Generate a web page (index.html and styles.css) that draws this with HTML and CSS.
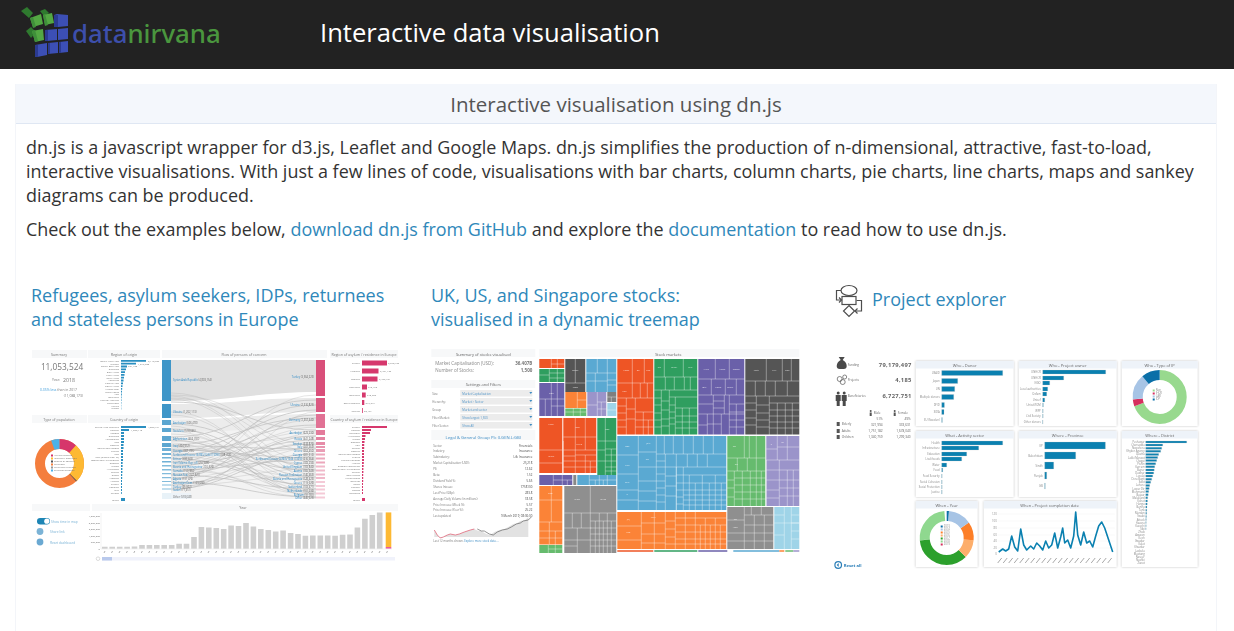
FILE: index.html
```html
<!DOCTYPE html>
<html lang="en">
<head>
<meta charset="utf-8">
<title>Interactive data visualisation</title>
<link rel="stylesheet" href="styles.css">
</head>
<body>
<header class="topbar">
  <a class="logo" href="#">
    <svg class="logo-mark" viewBox="15 7 55 55" width="55" height="55">
      <g fill="#2f7a2f"><path d="M21 11l6-4 6 6-4 5zM40 11l5-2 4 4-5 3zM26 31l5-4 5 5-5 6z"/></g>
      <g fill="#3c4fb5"><path d="M54 15l3-1 11 1v11l-10 1-4-1z"/><path d="M45 30l12-1v11l-10 1-2-1zM58 29l10-1v11l-10 1z"/><path d="M35 45l12-2v12l-10 2-2-1zM48 43l10-1v11l-10 1zM59 42l9-1v11l-9 1z"/></g>
      <g fill="#2b3a90"><path d="M54 15h4v12h-4zM45 30h3v11h-3zM35 45h3v12h-3zM48 43h2v11h-2zM59 42h2v11h-2z"/></g>
      <g fill="#53a843"><path d="M30 18l11-4 2 10-10 3zM43 15l9-2 2 10-9 2zM32 31l11-2 1 11-9 2z"/></g>
      <g fill="#3f8f3a"><path d="M30 18l3-1 3 10-3 1zM43 15l2-1 3 11-3 1zM32 31l3-1 3 11-3 1z"/></g>
    </svg>
    <span class="logo-text"><span class="logo-data">data</span><span class="logo-nirvana">nirvana</span></span>
  </a>
  <h1 class="site-title">Interactive data visualisation</h1>
</header>

<main class="panel">
  <h2 class="panel-title">Interactive visualisation using dn.js</h2>
  <div class="panel-body">
    <p>dn.js is a javascript wrapper for d3.js, Leaflet and Google Maps. dn.js simplifies the production of n-dimensional, attractive, fast-to-load, interactive visualisations. With just a few lines of code, visualisations with bar charts, column charts, pie charts, line charts, maps and sankey diagrams can be produced.</p>
    <p>Check out the examples below, <a href="#">download dn.js from GitHub</a> and explore the <a href="#">documentation</a> to read how to use dn.js.</p>
  </div>

  <section class="gallery">
    <article class="item">
      <h3 class="item-title"><a href="#">Refugees, asylum seekers, IDPs, returnees and stateless persons in Europe</a></h3>
      <svg class="thumb" viewBox="31 349 370 222" width="370" height="222">
        <g fill="#f7f8f9"><path d="M32 350h55v8H32zM88 350h72v8H88zM162 350h165v8H162zM330 350h68v8h-68zM32 415h55v8H32zM88 415h72v8H88zM330 415h68v8h-68zM32 504h58v7H32zM92 504h306v7H92z"/></g>
        <g class="cap" text-anchor="middle"><text x="59" y="356">Summary</text><text x="124" y="356">Region of origin</text><text x="244" y="356">Flow of persons of concern</text><text x="364" y="356">Region of asylum / residence in Europe</text><text x="59" y="421">Type of population</text><text x="124" y="421">Country of origin</text><text x="364" y="421">Country of asylum / residence in Europe</text><text x="243" y="509">Year</text></g>
        <text class="big" x="62" y="370" text-anchor="middle">11,053,524</text>
        <text class="sm" x="60" y="381" text-anchor="end">Year:</text><text class="mid" x="69" y="381.5" text-anchor="middle">2018</text>
        <text class="sm" x="40" y="391"><tspan fill="#3a9ad9">0.35% less</tspan> than in 2017</text>
        <text class="sm" x="83" y="396.5" text-anchor="end">(11,088,173)</text>

        <g fill="#2a8fc1"><path d="M121 360h25v1.8h-25zM121 362.8h15v1.8h-15zM121 365.6h6v1.8h-6zM121 368.4h5v1.8h-5zM121 371.2h4v1.8h-4zM121 374h3.5v1.8h-3.5zM121 376.8h3v1.8h-3zM121 379.6h2.5v1.8h-2.5zM121 382.4h2v1.8h-2zM121 385.2h1.5v1.8h-1.5zM121 388h1.2v1.8h-1.2zM121 390.8h1v1.8h-1zM121 393.6h.8v1.8h-.8zM121 396.4h.6v1.8h-.6zM121 399.2h.5v1.8h-.5zM121 402h.4v1.8h-.4zM121 404.8h.3v1.8h-.3zM121 407.6h.3v1.8h-.3z"/>
        <path d="M121 426h25v2h-25zM121 429h8v2h-8zM121 432h3v2h-3zM121 435h3v2h-3zM121 438h3v2h-3zM121 441h3v2h-3zM121 444h2.5v2h-2.5zM121 447h2.5v2h-2.5zM121 450h2v2h-2zM121 453h2v2h-2zM121 456h2v2h-2zM121 459h2v2h-2zM121 462h1.6v2h-1.6zM121 465h1.6v2h-1.6zM121 468h1.4v2h-1.4zM121 471h1.4v2h-1.4zM121 474h1.2v2h-1.2zM121 477h1.2v2h-1.2zM121 480h1v2h-1zM121 483h1v2h-1zM121 486h1v2h-1zM121 489h1v2h-1zM121 492h.8v2h-.8zM121 498h4v3h-4z"/></g>
        <g class="lb" text-anchor="end"><text x="119" y="361.8">South-West Asia</text><text x="119" y="364.6">Europe</text><text x="119" y="367.4">South-East Asia</text><text x="119" y="370.2">Stateless</text><text x="119" y="373">East Africa</text><text x="119" y="375.8">West Africa</text><text x="119" y="378.6">Horn Africa</text><text x="119" y="381.4">Americas</text><text x="119" y="384.2">Central Asia</text><text x="119" y="387">North Africa</text><text x="119" y="389.8">Middle East</text><text x="119" y="392.6">Great Lakes</text><text x="119" y="395.4">Asia</text><text x="119" y="398.2">Southern</text><text x="119" y="401">Central America</text><text x="119" y="403.8">Caribbean</text><text x="119" y="406.6">Pacific</text><text x="119" y="409.4">Russia</text>
        <text x="119" y="428">Syrian Arab Republic</text><text x="119" y="431">Ukraine</text><text x="119" y="434">Kosovo</text><text x="119" y="437">Stateless</text><text x="119" y="440">Afghanistan</text><text x="119" y="443">Iraq</text><text x="119" y="446">Georgia</text><text x="119" y="449">Serbia and Kosovo</text><text x="119" y="452">Eritrea</text><text x="119" y="455">Iran</text><text x="119" y="458">Iran (Islamic Rep. of)</text><text x="119" y="461">Bosnia and Herzegovina</text><text x="119" y="464">Somalia</text><text x="119" y="467">Russia</text><text x="119" y="470">Azerbaijan</text><text x="119" y="473">Nigeria</text><text x="119" y="476">Sudan</text><text x="119" y="479">Armenia</text><text x="119" y="482">Albania</text><text x="119" y="485">Turkey</text><text x="119" y="488">Pakistan</text><text x="119" y="491">Mali</text><text x="119" y="494">Guinea</text><text x="119" y="501">Other</text></g>

        <g fill="none" stroke-width="10">
          <circle cx="59.5" cy="463.5" r="19.5" pathLength="360" stroke="#f47e3d"/>
          <circle cx="59.5" cy="463.5" r="19.5" pathLength="360" stroke="#fdb933" stroke-dasharray="93 267" transform="rotate(-48 59.5 463.5)"/>
          <circle cx="59.5" cy="463.5" r="19.5" pathLength="360" stroke="#d6366b" stroke-dasharray="42 318" transform="rotate(-90 59.5 463.5)"/>
          <circle cx="59.5" cy="463.5" r="19.5" pathLength="360" stroke="#4db2e8" stroke-dasharray="20 340" transform="rotate(-110 59.5 463.5)"/>
          <circle cx="59.5" cy="463.5" r="19.5" pathLength="360" stroke="#555" stroke-dasharray="2 358" transform="rotate(45 59.5 463.5)"/>
        </g>
        <g><rect x="51" y="454.5" width="2" height="2" fill="#d6366b"/><rect x="51" y="457.5" width="2" height="2" fill="#fdb933"/><rect x="51" y="460.5" width="2" height="2" fill="#555"/><rect x="51" y="463.5" width="2" height="2" fill="#f47e3d"/><rect x="51" y="466.5" width="2" height="2" fill="#999"/><rect x="51" y="469.5" width="2" height="2" fill="#4db2e8"/></g>
        <g class="lb"><text x="54" y="456.2">Asylum-seekers</text><text x="54" y="459.2">Internally displaced</text><text x="54" y="462.2">Others of concern</text><text x="54" y="465.2">Refugees</text><text x="54" y="468.2">Returned refugees</text><text x="54" y="471.2">Stateless persons</text></g>

        <!-- sankey -->
        <path d="M171 418C240 418 250 428 316 428V499H171Z" fill="#f3f3f3"/>
        <path d="M171 360H316V392C260 392 230 401 171 401Z" fill="#e0e0e0"/>
        <path d="M171 404C240 404 250 398 316 398V412C250 412 240 418 171 418Z" fill="#e9e9e9"/>
        <path d="M171 420C230 420 250 414 316 414V428C250 428 230 432 171 432Z" fill="#ececec"/>
        <rect x="171" y="493" width="20" height="6" fill="#edf3f8"/>
        <g fill="none" stroke="#c4c4c4" stroke-width=".8">
          <path d="M171 402C240 402 250 430 316 430M171 437C240 437 250 400 316 400M171 445C230 445 250 418 316 418M171 449C240 449 250 470 316 470M171 452C230 452 260 410 316 410M171 455C240 455 250 425 316 425M171 458C230 458 250 485 316 485M171 462C240 462 240 405 316 405M171 466C230 466 260 440 316 440M171 470C230 470 250 460 316 460M171 474C240 474 250 444 316 444M171 478C240 478 250 415 316 415M171 482C240 482 250 497 316 497M171 485C240 485 250 436 316 436M171 489C230 489 250 454 316 454M171 429C240 429 250 477 316 477M171 424C240 424 250 466 316 466M171 440C240 440 250 493 316 493M171 446C240 446 250 449 316 449M171 450C240 450 250 458 316 458M171 475C240 475 250 489 316 489"/>
        </g>
        <g fill="none" stroke="#b5b5b5" stroke-width=".35">
          <path d="M171 399C230 399 260 470 316 470M171 398C240 398 260 452 316 452M171 396C230 396 280 482 316 482M171 395C250 395 250 445 316 445M171 393C240 393 250 462 316 462M171 412C240 412 250 489 316 489M171 415C230 415 250 474 316 474M171 465C230 465 250 420 316 420M171 480C230 480 250 395 316 395M171 490C240 490 270 412 316 412M171 470C250 470 250 494 316 494M171 456C230 456 260 478 316 478M171 426C220 426 270 498 316 498M171 431C220 431 270 483 316 483M171 438C220 438 270 472 316 472M171 443C220 443 270 492 316 492M171 447C220 447 270 464 316 464M171 451C220 451 270 436 316 436M171 459C220 459 270 431 316 431M171 463C220 463 270 448 316 448M171 467C220 467 270 427 316 427M171 472C220 472 270 442 316 442M171 476C220 476 270 433 316 433M171 479C220 479 270 456 316 456M171 483C220 483 270 468 316 468M171 486C220 486 270 475 316 475M171 488C220 488 270 447 316 447M171 434C250 434 240 495 316 495M171 441C250 441 240 486 316 486M171 453C250 453 240 491 316 491M171 460C250 460 240 480 316 480M171 468C250 468 240 497 316 497"/>
        </g>
        <g fill="#3f96c8"><path d="M162 360h9v41h-9zM162 404h9v14h-9z"/><path d="M162 420h9v5h-9zM162 428h9v4h-9zM162 436h9v5h-9zM162 443h9v4h-9z" opacity=".85"/><path d="M162 448h9v3h-9zM162 453h9v2h-9zM162 457h9v1.6h-9zM162 461h9v1.6h-9z" opacity=".75"/><path d="M162 465h9v1.4h-9zM162 469h9v1.4h-9zM162 473h9v1.2h-9zM162 477h9v1.2h-9zM162 481h9v1h-9zM162 484.6h9v1h-9zM162 488.4h9v1h-9z" opacity=".65"/><path d="M162 493h9v6h-9z" opacity=".12"/></g>
        <g fill="#d94f7a"><path d="M316 360h9v36h-9z"/><path d="M316 398h9v14h-9z" opacity=".95"/><path d="M316 414h9v14h-9z" opacity=".8"/><path d="M316 430h9v5h-9z" opacity=".75"/><path d="M316 437h9v3h-9z" opacity=".7"/><path d="M316 442h9v3h-9z" opacity=".65"/><path d="M316 446h9v2h-9z" opacity=".6"/><path d="M316 449h9v3h-9z" opacity=".55"/><path d="M316 453.5h9v2h-9zM316 457.5h9v2h-9zM316 461.5h9v2h-9z" opacity=".5"/><path d="M316 465.5h9v2h-9zM316 469.5h9v2h-9zM316 473.5h9v2h-9zM316 477h9v2h-9z" opacity=".4"/><path d="M316 481h9v2h-9zM316 485h9v2h-9zM316 488.5h9v2h-9zM316 492.5h9v2h-9zM316 496.5h9v2h-9z" opacity=".3"/></g>
        <g class="sk"><text x="173" y="381"><tspan class="bl">Syrian Arab Republic</tspan> (4,803,154)</text><text x="173" y="412.5"><tspan class="bl">Ukraine</tspan> (1,202,113)</text><text x="173" y="424"><tspan class="bl">Azerbaijan</tspan> (606,478)</text><text x="173" y="431.5"><tspan class="bl">Stateless</tspan> (518,046)</text><text x="173" y="440"><tspan class="bl">Afghanistan</tspan> (466,393)</text><text x="173" y="446.5"><tspan class="bl">Iraq</tspan> (404,912)</text><text x="173" y="451.5"><tspan class="bl">Georgia</tspan> (367,785)</text><text x="173" y="456"><tspan class="bl">Serbia and Kosovo (S/RES/1244 (1999))</tspan> (338,768)</text><text x="173" y="460"><tspan class="bl">Eritrea</tspan> (308,343)</text><text x="173" y="464"><tspan class="bl">Iran (Islamic Rep. of)</tspan> (257,688)</text><text x="173" y="468"><tspan class="bl">Bosnia and Herzegovina</tspan> (191,326)</text><text x="173" y="472"><tspan class="bl">Somalia</tspan> (150,984)</text><text x="173" y="476"><tspan class="bl">Russian Fed.</tspan> (147,921)</text><text x="173" y="480"><tspan class="bl">Algeria</tspan> (131,476)</text><text x="173" y="484"><tspan class="bl">Azerbaijan Dem.</tspan> (129,058)</text><text x="173" y="487.5"><tspan class="bl">Turkey</tspan> (95,002)</text><text x="173" y="491"><tspan class="bl">Sudan</tspan> (77,451)</text><text x="173" y="497.5">Other (559,648)</text></g>
        <g class="sk" text-anchor="end"><text x="314" y="378"><tspan class="bl">Turkey</tspan> (3,564,223)</text><text x="314" y="406"><tspan class="bl">Ukraine</tspan> (2,316,825)</text><text x="314" y="421"><tspan class="bl">Germany</tspan> (1,357,440)</text><text x="314" y="433.5"><tspan class="bl">Azerbaijan</tspan> (623,230)</text><text x="314" y="439.5"><tspan class="bl">Russia</tspan> (441,248)</text><text x="314" y="444.5"><tspan class="bl">Sweden</tspan> (318,876)</text><text x="314" y="448"><tspan class="bl">Italy</tspan> (287,369)</text><text x="314" y="452"><tspan class="bl">Greece</tspan> (263,450)</text><text x="314" y="456"><tspan class="bl">Georgia</tspan> (281,312)</text><text x="314" y="460"><tspan class="bl">Serbia and Kosovo (S/RES/1244 (1999))</tspan> (216,364)</text><text x="314" y="464"><tspan class="bl">Cyprus</tspan> (183,293)</text><text x="314" y="468"><tspan class="bl">United Kingdom</tspan> (169,840)</text><text x="314" y="472"><tspan class="bl">Austria</tspan> (165,345)</text><text x="314" y="476"><tspan class="bl">Russian Federation</tspan> (146,463)</text><text x="314" y="480"><tspan class="bl">Bosnia and Herzegovina</tspan> (128,423)</text><text x="314" y="484"><tspan class="bl">Greece</tspan> (113,226)</text><text x="314" y="488"><tspan class="bl">Switzerland</tspan> (103,471)</text><text x="314" y="492"><tspan class="bl">Netherlands</tspan> (101,236)</text><text x="314" y="495.5"><tspan class="bl">Belgium</tspan> (91,781)</text><text x="314" y="499"><tspan class="bl">Other</tspan> (446,225)</text></g>

        <g fill="#d6386d"><path d="M362 360.5h25v5h-25zM362 368.5h16.5v5h-16.5zM362 376.5h15.5v5h-15.5zM362 384.5h5v5h-5zM362 392.5h3.7v5h-3.7zM362 400h2.3v5h-2.3zM362 408h.8v5h-.8z"/>
        <path d="M362 426h25v2h-25zM362 429h9v2h-9zM362 432h8v2h-8zM362 435h3.5v2h-3.5zM362 438h3v2h-3zM362 441h2.5v2h-2.5zM362 444h2.2v2h-2.2zM362 447h2.2v2h-2.2zM362 450h2v2h-2zM362 453h2v2h-2zM362 456h2v2h-2zM362 459h2v2h-2zM362 462h1.8v2h-1.8zM362 465h1.6v2h-1.6zM362 468h1.4v2h-1.4zM362 471h1.4v2h-1.4zM362 474h1.2v2h-1.2zM362 477h1.2v2h-1.2zM362 480h1.2v2h-1.2zM362 483h1v2h-1zM362 486h1v2h-1zM362 489h1v2h-1zM362 492h1v2h-1zM362 498h3v3h-3z"/></g>
        <g class="lb" text-anchor="end"><text x="360" y="364">Turkey</text><text x="360" y="372">Western</text><text x="360" y="380">Eastern</text><text x="360" y="388">Northern</text><text x="360" y="396">Southern</text><text x="360" y="403.5">South Eastern</text><text x="360" y="411.5">Central</text>
        <text x="360" y="428">Turkey</text><text x="360" y="431">Ukraine</text><text x="360" y="434">Germany</text><text x="360" y="437">Azerbaijan</text><text x="360" y="440">Russia</text><text x="360" y="443">Sweden</text><text x="360" y="446">Italy</text><text x="360" y="449">Greece</text><text x="360" y="452">Georgia</text><text x="360" y="455">Serbia and Kosovo</text><text x="360" y="458">Cyprus</text><text x="360" y="461">United Kingdom</text><text x="360" y="464">Austria</text><text x="360" y="467">Russian Federation</text><text x="360" y="470">Bosnia and Herzegovina</text><text x="360" y="473">Greece</text><text x="360" y="476">Switzerland</text><text x="360" y="479">Netherlands</text><text x="360" y="482">Belgium</text><text x="360" y="485">Spain</text><text x="360" y="488">Norway</text><text x="360" y="491">Poland</text><text x="360" y="494">Denmark</text><text x="360" y="501">Other</text></g>
        <g class="lb" text-anchor="start"><text x="388" y="364">3,758,106</text><text x="380" y="372">2,481,126</text><text x="379" y="380">2,405,104</text><text x="368" y="388">742,162</text><text x="367" y="396">540,226</text><text x="365.5" y="403.5">319,217</text><text x="364" y="411.5">82,131</text><text x="148" y="361.8">3,110,937</text><text x="138" y="364.6">1,845,330</text><text x="128" y="367.4">621,130</text><text x="148" y="428">4,803,154</text><text x="131" y="431">1,202,113</text></g>

        <!-- controls and year -->
        <rect x="37" y="518" width="13" height="6.5" rx="3.2" fill="#1d85b5"/><circle cx="46.8" cy="521.2" r="2.6" fill="#fff"/>
        <text class="lk" x="51" y="522.5">Show time in map</text>
        <circle cx="40" cy="531.5" r="3.4" fill="#7bb3d6"/><text class="lk" x="50" y="533">Share link</text>
        <circle cx="40" cy="542" r="3.4" fill="#6aa9d2"/><text class="lk" x="50" y="543.5">Reset dashboard</text>
        <path fill="#cfcfcf" d="M102 548.7v-2h5.6v2zM109.4 548.7v-2h5.6v2zM116.9 548.7v-2h5.6v2zM124.3 548.7v-2h5.6v2zM131.7 548.7v-2.3h5.6v2.3zM139.2 548.7v-3.7h5.6v3.7zM146.6 548.7v-3.7h5.6v3.7zM154 548.7v-3.7h5.6v3.7zM161.4 548.7v-3.7h5.6v3.7zM168.9 548.7v-3.7h5.6v3.7zM176.3 548.7v-5h5.6v5zM183.7 548.7v-5h5.6v5zM191.2 548.7v-11.7h5.6v11.7zM198.6 548.7v-21.7h5.6v21.7zM206 548.7v-21.3h5.6v21.3zM213.5 548.7v-20.7h5.6v20.7zM220.9 548.7v-19.7h5.6v19.7zM228.3 548.7v-23.3h5.6v23.3zM235.7 548.7v-22.7h5.6v22.7zM243.2 548.7v-25.7h5.6v25.7zM250.6 548.7v-22.3h5.6v22.3zM258 548.7v-19.7h5.6v19.7zM265.5 548.7v-18.7h5.6v18.7zM272.9 548.7v-17.3h5.6v17.3zM280.3 548.7v-18.3h5.6v18.3zM287.8 548.7v-15.7h5.6v15.7zM295.2 548.7v-14.7h5.6v14.7zM302.6 548.7v-13h5.6v13zM310 548.7v-13.3h5.6v13.3zM317.5 548.7v-13.3h5.6v13.3zM324.9 548.7v-13.3h5.6v13.3zM332.3 548.7v-13h5.6v13zM339.8 548.7v-14h5.6v14zM347.2 548.7v-14.3h5.6v14.3zM354.6 548.7v-21.3h5.6v21.3zM362.1 548.7v-30h5.6v30zM369.5 548.7v-33.7h5.6v33.7zM376.9 548.7v-36.3h5.6v36.3z"/>
        <path d="M385.7 512.4h5.6v34.6h-5.6z" fill="#fdb933"/><path d="M385.7 547h5.6v1.7h-5.6z" fill="#e85c9c"/>
        <path d="M101 513V549H392" fill="none" stroke="#ddd" stroke-width=".4"/>
        <g class="lb" text-anchor="end"><text x="100" y="517">4,000,000</text><text x="100" y="523.5">3,000,000</text><text x="100" y="530">2,000,000</text><text x="100" y="536.5">1,000,000</text><text x="100" y="543">500,000</text><text x="100" y="550">0</text></g>
        <path d="M104 553l1-2M111.5 553l1-2M119 553l1-2M126.4 553l1-2M133.8 553l1-2M141.3 553l1-2M148.7 553l1-2M156 553l1-2M163.5 553l1-2M171 553l1-2M178.4 553l1-2M185.8 553l1-2M193.3 553l1-2M200.7 553l1-2M208 553l1-2M215.6 553l1-2M223 553l1-2M230.4 553l1-2M237.8 553l1-2M245.3 553l1-2M252.7 553l1-2M260 553l1-2M267.6 553l1-2M275 553l1-2M282.4 553l1-2M289.9 553l1-2M297.3 553l1-2M304.7 553l1-2M312 553l1-2M319.6 553l1-2M327 553l1-2M334.4 553l1-2M341.9 553l1-2M349.3 553l1-2M356.7 553l1-2M364.2 553l1-2M371.6 553l1-2M379 553l1-2M386.5 553l1-2" stroke="#aaa" stroke-width=".9" fill="none"/>
        <rect x="102" y="557" width="293" height="3.5" fill="#f0f2fb"/><rect x="102" y="557" width="10" height="3.5" fill="#b9c9ec"/><circle cx="98" cy="558.7" r="1.8" fill="none" stroke="#c5c5c5" stroke-width=".6"/>
      </svg>
    </article>

    <article class="item">
      <h3 class="item-title"><a href="#">UK, US, and Singapore stocks:<br>visualised in a dynamic treemap</a></h3>
      <svg class="thumb" viewBox="431.7 349 370 222" width="370" height="222">
        <path fill="#f7f8f9" d="M432 349h104v8H432zM540 349h260v8H540zM432 380h104v8H432zM432 430h104v10H432z"/>
        <g class="cap2" text-anchor="middle"><text x="484" y="356">Summary of stocks visualised</text><text x="484" y="386">Settings and Filters</text><text x="669" y="356">Stock markets</text></g>
        <g class="st"><text x="436" y="365">Market Capitalisation (USD):</text><text x="436" y="372">Number of Stocks:</text></g>
        <g class="st sb" text-anchor="end"><text x="533" y="365">36.407B</text><text x="533" y="372">1,500</text></g>
        <path fill="#ececec" d="M461 390h72v6.5h-72zM461 398h72v6.5h-72zM461 406h72v6.5h-72zM461 414h72v6.5h-72zM461 422h72v6.5h-72z"/>
        <g class="lb2"><text x="433" y="394.5">Size:</text><text x="433" y="402.5">Hierarchy:</text><text x="433" y="410.5">Group:</text><text x="433" y="418.5">Filter Market:</text><text x="433" y="426.5">Filter Sector:</text></g>
        <g class="sel"><text x="463" y="394.5">Market Capitalisation</text><text x="463" y="402.5">Market &gt; Sector</text><text x="463" y="410.5">Market and sector</text><text x="463" y="418.5">Show largest 1,500</text><text x="463" y="426.5">Show All</text></g>
        <path fill="#3d8cc4" d="M530 392l3 0-1.5 2zM530 400l3 0-1.5 2zM530 408l3 0-1.5 2zM530 416l3 0-1.5 2zM530 424l3 0-1.5 2z"/>
        <text class="hl" x="484" y="439" text-anchor="middle">Legal &amp; General Group Plc (LGEN.L:GB)</text>
        <g class="lb2"><text x="434" y="446.5">Sector:</text><text x="434" y="452.4">Industry:</text><text x="434" y="458.3">Subindustry:</text><text x="434" y="464.2">Market Capitalisation (USD):</text><text x="434" y="470.1">PE:</text><text x="434" y="476">Beta:</text><text x="434" y="481.9">Dividend Yield %:</text><text x="434" y="487.8">Shares Inissue:</text><text x="434" y="493.7">Last Price (GBp):</text><text x="434" y="499.6">Average Daily Volume (in millions):</text><text x="434" y="505.5">Price Increase (Week %):</text><text x="434" y="511.4">Price Increase (Year %):</text><text x="434" y="517.3">Last updated:</text></g>
        <g class="val" text-anchor="end"><text x="533" y="446.5">Financials</text><text x="533" y="452.4">Insurance</text><text x="533" y="458.3">Life Insurance</text><text x="533" y="464.2">25,218</text><text x="533" y="470.1">12.62</text><text x="533" y="476">1.52</text><text x="533" y="481.9">5.65</text><text x="533" y="487.8">7758100</text><text x="533" y="493.7">283.8</text><text x="533" y="499.6">18.58</text><text x="533" y="505.5">5.57</text><text x="533" y="511.4">25.22</text><text x="533" y="517.3">9 March 2019, 08:00:00</text></g>
        <path d="M435 530l3 5 3 3 3-1 4-2 3-1 5 1 4-1 5-2 6-2 4-1 4 2 3 0 5 3 4 1 4-3 5-2 5-1 4-2 5-3 4-1 3-2 5-1 3-3V537H435Z" fill="#e2e2e2"/>
        <path d="M435 530l3 5 3 3 3-1 4-2 3-1 5 1 4-1 5-2 6-2 4-1" fill="none" stroke="#e0556a" stroke-width=".7"/>
        <path d="M478 529l4 2 3 0 5 3 4 1 4-3 5-2 5-1 4-2 5-3 4-1 3-2 5-1 3-3" fill="none" stroke="#666" stroke-width=".7"/>
        <text class="lb2" x="434" y="542">Last 12 months shown. <tspan fill="#3d8cc4">Explore more stock data ...</tspan></text>

        <g class="tm">
          <rect x="540" y="359" width="25" height="9" fill="#ee5525"/><path d="M552 359v9M558 359v9M552 364h13"/>
          <rect x="540" y="369" width="25" height="13" fill="#2f9e5f"/><path d="M550 369v13M558 369v13M540 375h10M550 373h15M550 378h15"/>
          <rect x="540" y="383" width="25" height="33" fill="#6a60a9"/><path d="M552 383v33M558 383v16M540 399h25M546 399v17M558 399v17M552 406h13"/>
          <rect x="566" y="359" width="20" height="33" fill="#555"/><path d="M576 359v24M566 383h20"/>
          <rect x="587" y="359" width="30" height="33" fill="#5aa9d2"/><path d="M598 359v14M608 359v14M587 373h30M596 373v19M608 373v19M587 381h9M596 381h12M608 380h9M608 385h9"/>
          <rect x="566" y="392" width="21" height="16" fill="#fb8337"/><path d="M578 392v16M578 400h9"/>
          <rect x="566" y="408.5" width="21" height="7.5" fill="#66bb6e"/><path d="M574 408v8M581 408v8M566 412h21"/>
          <rect x="588" y="392" width="19" height="24" fill="#9b94ca"/><path d="M598 392v24M588 405h10M598 402h9M602 402v14M598 409h9"/>
          <rect x="608" y="392" width="9" height="10" fill="#7f7f7f"/><path d="M608 397h9M612 397v5"/>
          <rect x="608" y="403" width="9" height="13" fill="#9fd4e8"/><path d="M608 410h9"/>

          <rect x="540" y="418" width="23" height="55" fill="#ee5525"/><rect x="564" y="418" width="33" height="55" fill="#ee5525"/>
          <path d="M540 450h23M540 463h23M564 437h33M576 418v19M586 418v19M564 450h33M564 441v32M576 437v36M586 437v13M564 456h12M564 461h12M564 467h12M576 455h21M576 461h21M576 467h21M586 455v18M591 461v12"/>
          <rect x="598" y="418" width="19" height="57" fill="#2f9e5f"/><path d="M598 441h19M606 418v23M606 441v34M598 450h8M606 449h11M606 455h11M612 449v26M606 461h11M598 461h8M606 467h11M606 471h11"/>
          <rect x="540" y="475" width="33" height="10" fill="#6a60a9"/><path d="M554 475v10M563 475v10M554 480h19M568 480v5"/>
          <rect x="574" y="475" width="3" height="10" fill="#888"/>
          <rect x="578" y="475" width="39" height="10" fill="#5aa9d2"/><path d="M590 475v10M600 475v10M608 475v10M590 480h27M596 480v5M604 480v5"/>

          <rect x="540" y="486" width="23" height="58.5" fill="#fb8337"/><path d="M540 500h23M552 486v14M540 522h23M552 500v22M540 531h23M550 522v22M556 531v14M540 538h23"/>
          <rect x="540" y="545" width="23" height="8" fill="#66bb6e"/><path d="M549 545v8M556 545v8M549 549h14"/>
          <rect x="565" y="486" width="52" height="67" fill="#8f8f8f"/><path d="M591 486v27M565 513h52M565 528h27M582 513v15M573 513v15M591 513v40M565 540h26M578 528v25M565 546h13M600 513v40M608 513v40M591 521h26M591 528h26M591 534h26M591 540h26M591 546h26M596 521v32M604 521v32M612 521v32"/>

          <rect x="618" y="359" width="36" height="75.5" fill="#ee5525"/><path d="M633 359v24M645 359v24M618 383h36M633 383v15M641 383v15M648 383v15M618 398h36M627 398v37M636 398v37M618 406h9M618 413h9M618 420h9M618 427h9M627 409h9M627 419h9M636 412h18M636 420h18M644 412v23M649 420v15M636 427h18"/>
          <rect x="655" y="359" width="43" height="75.5" fill="#2f9e5f"/><path d="M665 359v18M684 359v18M655 377h43M666 377v13M675 377v13M685 377v13M691 377v13M655 390h43M662 390v45M670 390v45M655 398h7M655 405h7M655 413h7M655 420h7M655 427h7M662 401h8M662 410h8M662 419h8M662 426h8M670 397h28M676 397v38M670 405h6M670 412h6M670 418h6M670 424h6M676 408h22M683 408v27M676 416h22M676 422h22M690 408v27M676 428h22"/>
          <rect x="699" y="359" width="46" height="75.5" fill="#6a60a9"/><path d="M716 359v20M730 359v20M699 379h46M712 379v16M726 379v16M737 379v16M699 395h46M714 395v19M725 395v19M699 414h46M699 404h15M714 401h11M714 408h11M708 414v21M722 414v21M699 425h9M708 424h14M714 414v21M730 395v40M730 404h15M737 404v31M730 412h15M730 420h15M730 427h15"/>
          <rect x="746" y="359" width="54" height="75.5" fill="#555"/><path d="M767 359v22M783 359v22M792 359v22M746 381h54M756 381v15M766 381v15M776 381v15M788 381v15M746 396h54M757 396v39M746 403h11M746 410h11M746 418h11M746 425h11M757 405h13M770 396v39M757 413h13M757 420h13M757 427h13M770 403h30M770 410h30M778 403v32M786 403v32M793 403v32M770 416h30M770 422h30M770 428h30"/>

          <rect x="618" y="436" width="109" height="74" fill="#5aa9d2"/><path d="M639 436v74M618 455h21M618 474h21M618 490h21M618 500h21M639 452h18M639 467h18M639 481h18M639 491h18M639 501h18M657 436v74M665 436v18M674 436v18M684 436v18M694 436v18M704 436v18M714 436v18M657 454h70M657 467h70M666 454v56M677 454v56M657 461h9M657 474h9M657 481h9M657 488h9M657 495h9M657 502h9M666 476h11M666 486h11M666 496h11M677 467v43M688 454v13M698 454v13M708 454v13M684 467v43M677 475h50M677 483h50M677 490h7M677 497h7M677 504h7M690 475v35M696 483v27M703 475v35M710 483v27M716 475v35M722 483v27M684 490h43M684 495h43M684 500h43M684 505h43"/>
          <rect x="728" y="436" width="38" height="70" fill="#66bb6e"/><path d="M745 436v22M750 436v22M757 436v22M728 458h38M738 458v13M748 458v13M757 458v13M728 471h38M735 471v35M728 480h7M728 488h7M728 497h7M735 478h16M743 471v35M751 471v35M735 485h16M735 492h16M735 499h16M757 471v35M751 478h15M751 485h15M751 492h15M751 499h15M762 471v35"/>
          <rect x="767" y="436" width="33" height="70" fill="#9b94ca"/><path d="M778 436v24M788 436v24M767 449h11M778 447h22M767 460h33M767 460v46M780 460v46M767 470h13M767 480h13M767 490h13M767 498h13M780 470h20M788 470v36M780 480h20M794 470v36M780 488h20M780 496h20"/>
          <rect x="618" y="512" width="109" height="37" fill="#fb8337"/><path d="M642 512v37M618 526h24M618 540h24M642 523h24M642 534h24M642 543h24M666 512v37M655 512v11M655 523v26M676 512v37M666 521h10M666 529h10M666 537h10M666 544h10M676 518h51M686 512v37M696 512v37M676 525h51M676 532h51M676 539h51M706 518v31M716 518v31M701 525v24M711 525v24M721 525v24M676 544h51"/>
          <rect x="728" y="507" width="46" height="42" fill="#8f8f8f"/><path d="M745 507v42M728 520h17M728 533h17M728 541h17M745 515h29M752 507v8M762 507v8M745 525h29M745 533h29M745 541h29M755 515v34M765 515v34"/>
          <rect x="775" y="507" width="25" height="42" fill="#9fd4e8"/><path d="M785 507v16M775 515h10M775 523h25M785 523v26M792 507v42M775 535h10M792 515h8M792 523h8M792 531h8M792 539h8"/>
          <path class="s1" d="M618 551h36"/><path class="s2" d="M655 551h43"/><path class="s3" d="M699 551h29"/><path class="s4" d="M734 551h46"/><path class="s5" d="M780 551h5"/><path class="s6" d="M786 551h8"/><path class="s7" d="M794 551h6"/>
        </g>
        <g class="tk" text-anchor="middle"><text x="627" y="371">HSBC</text><text x="639" y="371">BP</text><text x="649" y="371">RIO</text><text x="625" y="392">AZN</text><text x="660" y="368">TM</text><text x="675" y="368">BABA</text><text x="691" y="368">SAP</text><text x="707" y="370">AAPL</text><text x="723" y="370">MSFT</text><text x="737" y="370">GOOG</text><text x="705" y="388">IBM</text><text x="719" y="388">CSCO</text><text x="731" y="388">ORCL</text><text x="757" y="371">XOM</text><text x="775" y="371">CVX</text><text x="788" y="371">COP</text><text x="628" y="447">BRK</text><text x="649" y="444">JPM</text><text x="628" y="466">WFC</text><text x="628" y="483">BAC</text><text x="628" y="495">C</text><text x="648" y="460">GS</text><text x="629" y="520">JNJ</text><text x="629" y="533">PFE</text><text x="654" y="518">UNH</text><text x="552" y="394">DBS</text><text x="576" y="371">OCBC</text><text x="576" y="388">UOB</text><text x="552" y="425">LLOY</text><text x="578" y="428">VOD</text><text x="552" y="457">BARC</text><text x="580" y="445">ULVR</text><text x="608" y="430">GSK</text><text x="551" y="494">DGE</text><text x="578" y="500">SHEL</text><text x="604" y="500">BATS</text><text x="735" y="447">KO</text><text x="737" y="465">PG</text><text x="772" y="445">T</text><text x="783" y="443">VZ</text><text x="736" y="520">GE</text><text x="736" y="528">HON</text></g>
      </svg>
    </article>

    <article class="item">
      <h3 class="item-title explorer">
        <svg class="flow-icon" viewBox="0 0 30 34" width="30" height="34">
          <g fill="none" stroke="#4d4d4d" stroke-width="1.2">
            <ellipse cx="15" cy="6.5" rx="8" ry="5"/>
            <rect x="8" y="12.5" width="14" height="8"/>
            <path d="M15 21.5l5.5 5.5-5.5 5.5-5.5-5.5z"/>
            <path d="M7 6.5H2.5V16H7"/><path d="M5 13.5l2.5 2.5L5 18.5"/>
            <path d="M22.5 16.5h5V27H21"/><path d="M23.5 24.5L21 27l2.5 2.5"/>
          </g>
        </svg>
        <a href="#">Project explorer</a>
      </h3>
      <svg class="thumb" viewBox="832.3 349 370 222" width="370" height="222">
        <g fill="#fff" class="cards"><rect x="917" y="361" width="98" height="65"/><rect x="1020" y="361" width="98" height="65"/><rect x="1123" y="361" width="76" height="65"/><rect x="917" y="431" width="98" height="66"/><rect x="1020" y="431" width="98" height="66"/><rect x="1123" y="431" width="76" height="136"/><rect x="917" y="501" width="62" height="66"/><rect x="985" y="501" width="133" height="66"/></g>
        <path fill="#eef3f9" d="M917 361h98v7.5h-98zM1020 361h98v7.5h-98zM1123 361h76v7.5h-76zM917 431h98v7.5h-98zM1020 431h98v7.5h-98zM1123 431h76v7.5h-76zM917 501h62v7.5h-62zM985 501h133v7.5h-133z"/>
        <g class="cap2" text-anchor="middle"><text x="966" y="366.5">Who - Donor</text><text x="1069" y="366.5">Who - Project owner</text><text x="1161" y="366.5">Who - Type of IP</text><text x="966" y="436.5">What - Activity sector</text><text x="1069" y="436.5">Where - Province</text><text x="1161" y="436.5">Where - District</text><text x="948" y="506.5">When - Year</text><text x="1051" y="506.5">When - Project completion date</text></g>

        <path fill="#4a4a4a" d="M838 366c0-3 2-5 4-6l-2-3h6l-2 3c2 1 4 3 4 6 0 2-1 3-3 3h-4c-2 0-3-1-3-3zM838 393a1.5 1.5 0 1 1 3 0 1.5 1.5 0 1 1-3 0zM837 395h5v6h-1v5h-3v-5h-1zM844 393a1.5 1.5 0 1 1 3 0 1.5 1.5 0 1 1-3 0zM843 395h5v6h-1v5h-3v-5h-1z"/>
        <g fill="none" stroke="#555" stroke-width=".7"><circle cx="841" cy="379" r="2.5"/><circle cx="846" cy="377" r="2"/><circle cx="844" cy="382" r="2.5"/></g>
        <g class="lb3"><text x="849" y="365.5">Funding</text><text x="849" y="380.5">Projects</text><text x="849" y="396.5">Beneficiaries</text></g>
        <g class="stat" text-anchor="end"><text x="913" y="366.5">79,179,497</text><text x="913" y="382">4,185</text><text x="913" y="398">6,727,751</text></g>
        <path fill="#555" d="M871 411a1 1 0 1 1 2 0 1 1 0 1 1-2 0zM871 412.5h2v3.5h-2zM895 411a1 1 0 1 1 2 0 1 1 0 1 1-2 0zM895 412.5h2v3.5h-2zM838 422h3v4h-3zM838 429h3v4h-3zM838 435h3v4h-3z"/>
        <g class="lb3" text-anchor="start"><text x="875" y="414">Male</text><text x="899" y="414">Female</text><text x="843" y="425">Elderly</text><text x="843" y="431.5">Adults</text><text x="843" y="437.5">Children</text></g>
        <g class="lb4" text-anchor="end"><text x="884" y="419.5">51%</text><text x="912" y="419.5">49%</text><text x="884" y="425.5">321,994</text><text x="912" y="425.5">333,631</text><text x="884" y="432">1,751,182</text><text x="912" y="432">1,678,043</text><text x="884" y="438">1,340,759</text><text x="912" y="438">1,299,340</text></g>
        <circle cx="839.5" cy="565" r="3.3" fill="none" stroke="#2c7fb8" stroke-width="1.2"/><path d="M838 565l2-2v4z" fill="#2c7fb8"/>
        <text class="reset" x="845" y="567">Reset all</text>

        <g class="hb">
          <path d="M943 370.5h61v5h-61zM943 378.5h16v5h-16zM943 386.5h13v5h-13zM943 394.5h12v5h-12zM943 402.5h2.7v5h-2.7zM943 409.5h2.3v5h-2.3zM943 417.5h.6v5h-.6z"/>
          <path d="M1044 370h63v4h-63zM1044 376h21v4h-21zM1044 381h7v4h-7zM1044 387h5v4h-5zM1044 392h4v4h-4zM1044 398h2v4h-2zM1044 403h.6v4h-.6zM1044 409h.4v4h-.4zM1044 414h.4v4h-.4zM1044 420h.3v4h-.3z"/>
          <path d="M943 441h61v4h-61zM943 446h37v4h-37zM943 452h25v4h-25zM943 457h20v4h-20zM943 463h5v4h-5zM943 468h1v4h-1zM943 474h.4v4h-.4zM943 480h.4v4h-.4zM943 485h.4v4h-.4zM943 490h.4v4h-.4z"/>
          <path d="M1046 442h60.7v7h-60.7zM1046 452h31v7h-31zM1046 462h9v7h-9zM1046 472h2v7h-2zM1046 483h.5v6h-.5z"/>
          <path d="M1147 441h41v2h-41zM1147 444.1h17v2h-17zM1147 447.2h16v2h-16zM1147 450.3h15v2h-15zM1147 453.4h13v2h-13zM1147 456.5h12v2h-12zM1147 459.6h11v2h-11zM1147 462.7h10v2h-10zM1147 465.8h9v2h-9zM1147 468.9h8.5v2h-8.5zM1147 472h8v2h-8zM1147 475.1h7v2h-7zM1147 478.2h6v2h-6zM1147 481.3h5v2h-5zM1147 484.4h4v2h-4zM1147 487.5h3.5v2h-3.5zM1147 490.6h3v2h-3zM1147 493.7h2.5v2h-2.5zM1147 496.8h2v2h-2zM1147 499.9h1.8v2h-1.8zM1147 503h1.5v2h-1.5zM1147 506.1h1.3v2h-1.3zM1147 509.2h1.1v2h-1.1zM1147 512.3h1v2h-1zM1147 515.4h.8v2h-.8zM1147 518.5h.6v2h-.6zM1147 521.6h.5v2h-.5zM1147 524.7h.5v2h-.5zM1147 527.8h.4v2h-.4z"/>
        </g>
        <g class="lb5" text-anchor="end"><text x="941" y="374">USAID</text><text x="941" y="382">Japan</text><text x="941" y="390">UN</text><text x="941" y="398">Multiple donors</text><text x="941" y="406">DFID</text><text x="941" y="413">SIDA</text><text x="941" y="421">EU (Sweden)</text>
          <text x="1042" y="373">UNHCR</text><text x="1042" y="379">UNHCR</text><text x="1042" y="384">NGO</text><text x="1042" y="390">Local authorities</text><text x="1042" y="395">Oxfam</text><text x="1042" y="401">Unicef</text><text x="1042" y="406">Unicef/IOM</text><text x="1042" y="412">WFP</text><text x="1042" y="417">Civil Society</text><text x="1042" y="423">Other donors</text>
          <text x="941" y="444">Health</text><text x="941" y="449">Infrastructure</text><text x="941" y="455">Education</text><text x="941" y="460">Livelihoods</text><text x="941" y="466">Water</text><text x="941" y="471">Food</text><text x="941" y="477">Food Security</text><text x="941" y="483">Social Cohesion</text><text x="941" y="488">Social Protection</text><text x="941" y="493">Justice</text>
          <text x="1044" y="446.5">KP</text><text x="1044" y="456.5">Balochistan</text><text x="1044" y="466.5">Sindh</text><text x="1044" y="476.5">Punjab</text><text x="1044" y="487">GB</text>
          <text x="1146" y="443">Peshawar</text><text x="1146" y="446.1">Charsadda</text><text x="1146" y="449.2">Nowshera</text><text x="1146" y="452.3">Khyber Agency</text><text x="1146" y="455.4">Quetta</text><text x="1146" y="458.5">Lakki Marwat</text><text x="1146" y="461.6">Chagai</text><text x="1146" y="464.7">Pishin</text><text x="1146" y="467.8">Kurram</text><text x="1146" y="470.9">Buner</text><text x="1146" y="474">Dadhar</text><text x="1146" y="477.1">Loralai</text><text x="1146" y="480.2">Dera Bugti</text><text x="1146" y="483.3">Swat</text><text x="1146" y="486.4">Lahore</text><text x="1146" y="489.5">Lower Dir</text><text x="1146" y="492.6">Mohmand</text><text x="1146" y="495.7">Bajaur</text><text x="1146" y="498.8">Malakand</text><text x="1146" y="501.9">Kohat</text><text x="1146" y="505">Hangu</text><text x="1146" y="508.1">Bannu</text><text x="1146" y="511.2">Tank</text><text x="1146" y="514.3">Mardan</text><text x="1146" y="517.4">Swabi</text><text x="1146" y="520.5">Attock</text><text x="1146" y="523.6">Hazara</text><text x="1146" y="526.7">Karachi</text><text x="1146" y="529.8">Sibi</text><text x="1146" y="532.9">Zhob</text><text x="1146" y="536">Awaran</text><text x="1146" y="539.1">Kech</text><text x="1146" y="542.2">Gwadar</text><text x="1146" y="545.3">Kalat</text><text x="1146" y="548.4">Khuzdar</text><text x="1146" y="551.5">Lasbela</text><text x="1146" y="554.6">Mastung</text><text x="1146" y="557.7">Naseer</text><text x="1146" y="560.8">Nushki</text><text x="1146" y="563.9">Ziarat</text></g>

        <g fill="none" stroke-width="10">
          <circle cx="1161" cy="397" r="22" pathLength="360" stroke="#98d98e" stroke-dasharray="250 110" transform="rotate(-90 1161 397)"/>
          <circle cx="1161" cy="397" r="22" pathLength="360" stroke="#d62f5e" stroke-dasharray="15 345" transform="rotate(160 1161 397)"/>
          <circle cx="1161" cy="397" r="22" pathLength="360" stroke="#a7c4e5" stroke-dasharray="55 305" transform="rotate(175 1161 397)"/>
          <circle cx="1161" cy="397" r="22" pathLength="360" stroke="#0a6fa8" stroke-dasharray="40 320" transform="rotate(230 1161 397)"/>
          <circle cx="948" cy="538" r="22" pathLength="360" stroke="#8fd88f" stroke-dasharray="90 270" transform="rotate(175 948 538)"/>
          <circle cx="948" cy="538" r="22" pathLength="360" stroke="#2ca02c" stroke-dasharray="130 230" transform="rotate(45 948 538)"/>
          <circle cx="948" cy="538" r="22" pathLength="360" stroke="#fdae6b" stroke-dasharray="40 320" transform="rotate(5 948 538)"/>
          <circle cx="948" cy="538" r="22" pathLength="360" stroke="#fd7f28" stroke-dasharray="40 320" transform="rotate(-35 948 538)"/>
          <circle cx="948" cy="538" r="22" pathLength="360" stroke="#a7c4e5" stroke-dasharray="50 310" transform="rotate(-85 948 538)"/>
          <circle cx="948" cy="538" r="22" pathLength="360" stroke="#0a6fa8" stroke-dasharray="5 355" transform="rotate(-90 948 538)"/>
        </g>
        <path fill="#98d98e" d="M1154 389.5h2v2h-2z"/><path fill="#d62f5e" d="M1154 392.5h2v2h-2z"/><path fill="#a7c4e5" d="M1154 395.5h2v2h-2z"/><path fill="#0a6fa8" d="M1154 398.5h2v2h-2z"/>
        <g class="lb5"><text x="1157" y="391.2">Non</text><text x="1157" y="394.2">IHCR</text><text x="1157" y="397.2">CAR</text><text x="1157" y="400.2">IDP</text></g>
        <path fill="#0a6fa8" d="M942 525.5h2v2h-2z"/><path fill="#a7c4e5" d="M942 528.5h2v2h-2z"/><path fill="#fd7f28" d="M942 531.5h2v2h-2z"/><path fill="#fdae6b" d="M942 534.5h2v2h-2z"/><path fill="#2ca02c" d="M942 537.5h2v2h-2z"/><path fill="#8fd88f" d="M942 540.5h2v2h-2z"/><path fill="#d62f5e" d="M942 543.5h2v2h-2z"/>
        <g class="lb5"><text x="945" y="527.2">2013</text><text x="945" y="530.2">2014</text><text x="945" y="533.2">2015</text><text x="945" y="536.2">2016</text><text x="945" y="539.2">2017</text><text x="945" y="542.2">2018</text><text x="945" y="545.2">2019</text></g>

        <g stroke="#eee" stroke-width=".4"><path d="M999 514H1116M999 521H1116M999 528H1116M999 535H1116M999 541H1116M999 548H1116"/></g>
        <g class="lb5" text-anchor="end"><text x="998" y="515">120</text><text x="998" y="522">100</text><text x="998" y="529">80</text><text x="998" y="536">60</text><text x="998" y="542">40</text><text x="998" y="549">20</text><text x="998" y="555">0</text></g>
        <polyline fill="none" stroke="#0a80b0" stroke-width="1.6" stroke-linejoin="round" points="1000,552 1004,549 1007,551 1010,549 1013,536 1016,547 1019,551 1022,529 1025,545 1028,550 1032,546 1035,549 1038,543 1041,546 1044,550 1047,541 1050,548 1053,545 1056,533 1059,548 1062,537 1064,528 1066,543 1069,540 1072,548 1075,536 1077,512 1079,535 1082,545 1085,532 1088,543 1091,541 1094,547 1097,536 1100,526 1103,522 1106,528 1110,540 1114,552"/>
        <path fill="none" stroke="#aaa" stroke-width="1" d="M999 563l4-5M1004.5 563l4-5M1010 563l4-5M1015.5 563l4-5M1021 563l4-5M1026.5 563l4-5M1032 563l4-5M1037.5 563l4-5M1043 563l4-5M1048.5 563l4-5M1054 563l4-5M1059.5 563l4-5M1065 563l4-5M1070.5 563l4-5M1076 563l4-5M1081.5 563l4-5M1087 563l4-5M1092.5 563l4-5M1098 563l4-5M1103.5 563l4-5M1109 563l4-5"/>
      </svg>
    </article>
  </section>
</main>
</body>
</html>
```

FILE: styles.css
```css
html, body {
  margin: 0;
  padding: 0;
  height: 631px;
  overflow: hidden;
  background: #fff;
}

body {
  font-family: "Open Sans", "Liberation Sans", sans-serif;
  color: #333;
}

a {
  color: #2f88ba;
  text-decoration: none;
}

.topbar {
  display: flex;
  align-items: center;
  height: 69px;
  padding-left: 15px;
  background: #222;
}

.logo {
  display: flex;
  align-items: center;
  width: 305px;
}

.logo-mark {
  display: block;
  margin-right: 2px;
  flex: none;
}

.logo-text {
  font-family: "Noto Sans", "Open Sans", sans-serif;
  font-size: 25.8px;
  font-weight: 500;
  line-height: 30px;
  margin-top: -3px;
}

.logo-data { color: #3d4fab; }
.logo-nirvana { color: #4a963e; }

.site-title {
  margin: -4px 0 0;
  font-size: 25.6px;
  font-weight: 400;
  color: #fff;
  line-height: 32px;
}

.panel {
  margin: 15px 17px 0 15px;
  border: 1px solid #f3f5f9;
  border-top: 0;
  height: 700px;
  box-sizing: border-box;
}

.panel-title {
  margin: 0;
  height: 40px;
  box-sizing: border-box;
  background: #f4f7fc;
  border-bottom: 1px solid #dfe7f3;
  text-align: center;
  font-size: 20.5px;
  font-weight: 400;
  line-height: 41px;
  color: #555;
}

.panel-body {
  padding: 11px 10px 0;
  font-size: 17.95px;
  line-height: 24px;
}

.panel-body p {
  margin: 0 0 10px;
}

.gallery {
  display: grid;
  grid-template-columns: repeat(3, 1fr);
  margin-top: 42px;
}

.item {
  padding: 0 15px;
  min-width: 0;
}

.item-title {
  margin: 0;
  height: 66px;
  font-size: 18px;
  font-weight: 400;
  line-height: 24px;
}

.explorer {
  display: flex;
  align-items: flex-start;
  gap: 8px;
  padding: 1px 0 0 3px;
  box-sizing: border-box;
}

.explorer a {
  line-height: 30px;
}

.flow-icon {
  display: block;
  flex: none;
}

.thumb {
  display: block;
  filter: blur(0.55px);
  font-family: "Open Sans", sans-serif;
}

/* thumbnail typography */
.cap { font-size: 3.6px; fill: #777; }
.cap2 { font-size: 4px; fill: #666; }
.big { font-size: 8.3px; fill: #777; }
.mid { font-size: 5.2px; fill: #777; }
.sm { font-size: 3.4px; fill: #777; }
.lb { font-size: 2.5px; fill: #777; }
.sk { font-size: 2.6px; fill: #666; }
.sk .bl { fill: #2c88c4; }
.lk { font-size: 3.2px; fill: #7bb3d6; }
.st { font-size: 4.5px; fill: #888; }
.sb { font-weight: 700; fill: #777; }
.lb2 { font-size: 2.8px; fill: #777; }
.sel { font-size: 2.9px; fill: #4d93c8; }
.hl { font-size: 4.2px; fill: #3d8cc4; }
.val { font-size: 2.9px; fill: #444; }
.lb3 { font-size: 3px; fill: #666; }
.lb4 { font-size: 3.2px; fill: #666; }
.lb5 { font-size: 2.7px; fill: #888; }
.stat { font-size: 5.8px; font-weight: 700; fill: #666; letter-spacing: .3px; }
.reset { font-size: 4.2px; font-weight: 700; fill: #2c7fb8; }

.tm path { fill: none; stroke: #fff; stroke-opacity: .75; stroke-width: .5; }
.tm .s1 { stroke: #ee5525; stroke-opacity: 1; stroke-width: 1.5; }
.tm .s2 { stroke: #2f9e5f; stroke-opacity: 1; stroke-width: 1.5; }
.tm .s3 { stroke: #6a60a9; stroke-opacity: 1; stroke-width: 1.5; }
.tm .s4 { stroke: #5aa9d2; stroke-opacity: 1; stroke-width: 1.5; }
.tm .s5 { stroke: #fb8337; stroke-opacity: 1; stroke-width: 1.5; }
.tm .s6 { stroke: #66bb6e; stroke-opacity: 1; stroke-width: 1.5; }
.tm .s7 { stroke: #9b94ca; stroke-opacity: 1; stroke-width: 1.5; }
.tk { font-size: 2.3px; fill: #fff; fill-opacity: .8; }

.cards rect { filter: drop-shadow(0 .6px .8px rgba(0, 0, 0, .25)); }

.hb path {
  fill: #0a80b0;
  stroke: #c8c8c8;
  stroke-width: .25;
}
```
